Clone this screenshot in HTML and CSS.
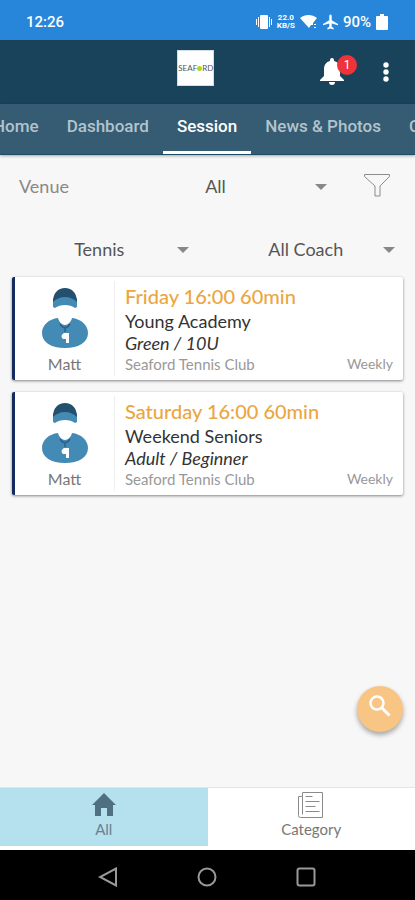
FILE: index.html
```html
<!DOCTYPE html>
<html lang="en">
<head>
<meta charset="utf-8">
<meta name="viewport" content="width=device-width, initial-scale=1">
<title>Seaford Tennis Club</title>
<link rel="stylesheet" href="styles.css">
</head>
<body>
<svg class="defs" aria-hidden="true">
  <symbol id="coach" viewBox="0 0 48 62">
    <path fill="#438ab5" d="M12 12c4-6 20-6 24 0v8l-2 1c-5-4-15-4-20 0l-2-1z"/>
    <path fill="#23506f" d="M12 15C12 6 17 1 24 1s12 5 12 14c-3-3-7-5-12-5s-9 2-12 5z"/>
    <path fill="#438ab5" d="M17 31c1 4 4 7 7 7s6-3 7-7c9 1 16 7 16 15 0 9-9 15-23 15S1 55 1 46c0-8 7-14 16-15z"/>
    <path fill="none" stroke="#2b6288" stroke-width="1.500" d="M19 37c3 5 7 5 10 0M24 41v4"/>
    <path fill="#fff" d="M23 46h5v10h-3v-4h-3c-2-2-2-4 1-6z"/>
  </symbol>
</svg>

<div class="status">
  <time>12:26</time>
  <div class="status-icons">
    <svg width="16" height="16" viewBox="0 0 16 16" fill="#fff" aria-hidden="true"><rect x="4" y="1" width="8" height="14" rx="1"/><path d="M2 3h1v10H2zM0 5h1v6H0zM13 3h1v10h-1zM15 5h1v6h-1z"/></svg>
    <div class="speed"><span>22.0</span><span>KB/S</span></div>
    <svg width="18" height="16" viewBox="0 0 18 16" fill="#fff" aria-hidden="true"><path d="M0 4C5 0 12 0 17 4l-4 5v2h-2l-2 3z"/><path d="M14 10h2v1h-2zM14 13h2v1h-2z"/></svg>
    <svg width="15" height="16" viewBox="0 0 16 16" fill="#fff" aria-hidden="true"><path d="M8 0c1 0 1.300 1 1.300 2v4L16 10v1.500L9.300 9.500v3.500l2 1.500V16L8 15l-3.300 1v-1.500l2-1.500V9.500L0 11.500V10l6.700-4V2C6.700 1 7 0 8 0z"/></svg>
    <span>90%</span>
    <svg width="12" height="16" viewBox="0 0 12 16" fill="#fff" aria-hidden="true"><path d="M4 0h4v2h3q1 0 1 1v12q0 1-1 1H1q-1 0-1-1V3q0-1 1-1h3z"/></svg>
  </div>
</div>

<header class="appbar">
  <div class="logo"><span>SEAF</span><i></i><span>RD</span></div>
  <div class="actions">
    <button class="bell" type="button" aria-label="Notifications">
      <svg width="24" height="28" viewBox="0 0 24 28" fill="#fff" aria-hidden="true"><path d="M10 3V2q0-2 2-2t2 2v1c4 1 6 4 6 8v7l4 4v1H0v-1l4-4v-7c0-4 2-7 6-8zM9 24h6q0 3-3 3t-3-3z"/></svg>
      <span class="badge">1</span>
    </button>
    <button type="button" aria-label="More options">
      <svg width="6" height="20" viewBox="0 0 6 20" fill="#fff" aria-hidden="true"><circle cx="3" cy="3" r="2.700"/><circle cx="3" cy="10" r="2.700"/><circle cx="3" cy="17" r="2.700"/></svg>
    </button>
  </div>
</header>

<nav class="tabs" aria-label="Sections">
  <a href="#">Home</a>
  <a href="#">Dashboard</a>
  <a href="#" class="active" aria-current="page">Session</a>
  <a href="#">News &amp; Photos</a>
  <a href="#">Contact</a>
</nav>

<main>
  <form class="filters">
    <div class="row venue">
      <label for="venue">Venue</label>
      <div class="pick"><select id="venue"><option>All</option></select></div>
      <button type="button" aria-label="Filter">
        <svg width="26" height="23" viewBox="0 0 26 23" fill="none" stroke="#8c8c8c" aria-hidden="true"><path d="M.5.500h25v2L16 12v10h-5V12L.5 2.500z"/></svg>
      </button>
    </div>
    <div class="row pair">
      <div class="pick"><select aria-label="Sport"><option>Tennis</option></select></div>
      <div class="pick"><select aria-label="Coach"><option>All Coach</option></select></div>
    </div>
  </form>

  <section class="cards">
    <article class="card">
      <div class="coach"><svg width="48" height="62" aria-hidden="true"><use href="#coach"/></svg><span>Matt</span></div>
      <div class="info">
        <h2>Friday 16:00 60min</h2>
        <p class="name">Young Academy</p>
        <p class="level">Green / 10U</p>
        <p class="meta"><span>Seaford Tennis Club</span><small>Weekly</small></p>
      </div>
    </article>
    <article class="card">
      <div class="coach"><svg width="48" height="62" aria-hidden="true"><use href="#coach"/></svg><span>Matt</span></div>
      <div class="info">
        <h2>Saturday 16:00 60min</h2>
        <p class="name">Weekend Seniors</p>
        <p class="level">Adult / Beginner</p>
        <p class="meta"><span>Seaford Tennis Club</span><small>Weekly</small></p>
      </div>
    </article>
  </section>

  <button class="fab" type="button" aria-label="Search">
    <svg width="22" height="22" viewBox="0 0 22 22" fill="none" stroke="#fff" aria-hidden="true"><circle cx="8" cy="8" r="6.500" stroke-width="2.500"/><path d="M13 13l7.500 7.500" stroke-width="3"/></svg>
  </button>
</main>

<nav class="bottom" aria-label="Views">
  <a href="#" class="on">
    <svg width="24" height="26" viewBox="0 0 24 26" fill="#4f7080" aria-hidden="true"><path d="M12 1l12 12h-3v11h-6v-8H9v8H3V13H0z"/></svg>
    <span>All</span>
  </a>
  <a href="#">
    <svg width="26" height="26" viewBox="0 0 26 26" fill="none" stroke="#8a8a8a" aria-hidden="true"><path d="M4.500 4.500V.5h20v25h-22q-2 0-2-2v-19h4v18M7.500 4.500h7M7.500 9.500h14M7.500 14.500h10M7.500 19.500h14"/></svg>
    <span>Category</span>
  </a>
</nav>

<div class="system">
  <button type="button" aria-label="Back"><svg width="20" height="20" viewBox="0 0 20 20" aria-hidden="true"><path d="M18 1.500v17L2 10z"/></svg></button>
  <button type="button" aria-label="Home screen"><svg width="20" height="20" viewBox="0 0 20 20" aria-hidden="true"><circle cx="10" cy="10" r="8.500"/></svg></button>
  <button type="button" aria-label="Recent apps"><svg width="20" height="20" viewBox="0 0 20 20" aria-hidden="true"><rect x="1.500" y="1.500" width="17" height="17" rx="2"/></svg></button>
</div>
</body>
</html>
```
FILE: styles.css
```css
* { box-sizing: border-box; }

body {
  margin: 0;
  min-height: 100vh;
  display: flex;
  flex-direction: column;
  background: #f7f7f7;
  color: #333;
  font-family: Lato, "Open Sans", sans-serif;
  font-size: 16px;
}

button {
  padding: 0;
  border: 0;
  background: none;
  font: inherit;
}

a { text-decoration: none; }
svg { display: block; flex: none; }
h2, p { margin: 0; }
.defs { position: absolute; width: 0; height: 0; }

.status {
  height: 40px;
  padding: 4px 27px 0 26px;
  display: flex;
  align-items: center;
  justify-content: space-between;
  background: #2786da;
  color: #fff;
  font: 500 15px/20px Roboto, sans-serif;
}

.status-icons {
  display: flex;
  align-items: center;
  gap: 5px;
}

.speed {
  display: flex;
  flex-direction: column;
  font-size: 8px;
  font-weight: 700;
  line-height: 8px;
  text-align: center;
}

.appbar {
  height: 64px;
  padding: 0 26px 0 20px;
  display: grid;
  grid-template-columns: 9fr 37px 10fr;
  align-items: center;
  background: #19435a;
}

.logo {
  grid-column: 2;
  height: 36px;
  margin-bottom: 8px;
  display: flex;
  align-items: center;
  justify-content: center;
  background: #fff;
  border: 1px solid #d5dde2;
  color: #555;
  font: 8px/10px Lato, sans-serif;
}

.logo i {
  flex: none;
  width: 5px;
  height: 5px;
  border-radius: 50%;
  background: #b4d420;
}

.actions {
  display: flex;
  align-items: center;
  justify-content: flex-end;
  gap: 39px;
}

.bell { position: relative; }

.badge {
  position: absolute;
  top: -3px;
  left: 17px;
  width: 20px;
  height: 20px;
  border-radius: 50%;
  background: #ee343a;
  color: #fff;
  font: 12px/20px Roboto, sans-serif;
}

.tabs {
  height: 51px;
  display: flex;
  overflow: hidden;
  background: #355c72;
  border-bottom: 1px solid #1e4c66;
  box-shadow: 0 1px 3px #0005;
}

.tabs a {
  flex: none;
  padding: 0 14px;
  color: #b3c3cd;
  font: 500 17px/45px Roboto, sans-serif;
}

.tabs a:first-child { margin-left: -21px; }

.tabs .active {
  color: #fff;
  border-bottom: 3px solid #fff;
}

main {
  flex: 1;
  position: relative;
}

.row {
  height: 61px;
  display: flex;
  align-items: center;
}

.venue { padding: 0 25px 0 19px; }
.venue label { width: 85px; color: #888; font-size: 18px; }
.venue button { margin-left: 37px; }
.pair { padding: 5px 20px 0 10px; gap: 28px; }

.pick {
  flex: 1;
  position: relative;
}

.pick::after {
  content: "";
  position: absolute;
  top: 50%;
  right: 0;
  margin-top: -2px;
  border: 6px solid transparent;
  border-top-color: #888;
  border-bottom: 0;
  pointer-events: none;
}

select {
  display: block;
  width: 100%;
  height: 32px;
  padding: 0;
  appearance: none;
  border: 0;
  background: none;
  color: #555;
  font: 18px/32px Lato, sans-serif;
  text-align-last: center;
}

.cards {
  padding: 0 12px;
  display: grid;
  gap: 12px;
}

.card {
  height: 103px;
  display: flex;
  background: #fff;
  border-left: 3px solid #142a60;
  border-radius: 2px;
  box-shadow: 0 1px 3px #0007;
}

.coach {
  width: 100px;
  margin: 4px 0;
  padding-top: 6px;
  display: flex;
  flex-direction: column;
  align-items: center;
  gap: 5px;
  border-right: 1px solid #eee;
  color: #777;
  line-height: 20px;
}

.info {
  flex: 1;
  padding: 6px 10px 0;
}

.info h2 {
  color: #eba641;
  font-size: 20px;
  font-weight: 500;
  line-height: 26px;
}

.info .name {
  font-size: 18px;
  line-height: 24px;
}

.info .level {
  font-size: 18px;
  font-style: italic;
  line-height: 20px;
}

.info .meta {
  display: flex;
  justify-content: space-between;
  color: #999;
  font-size: 15px;
  line-height: 22px;
}

.meta small { font-size: 14px; }

.fab {
  position: absolute;
  right: 12px;
  bottom: 55px;
  width: 46px;
  height: 46px;
  display: grid;
  justify-content: center;
  padding-top: 9px;
  align-content: start;
  border-radius: 50%;
  background: #f9c585;
  box-shadow: 0 3px 5px #0005;
}

.bottom {
  height: 63px;
  padding-bottom: 4px;
  display: grid;
  grid-template-columns: 1fr 1fr;
  background: #fff;
  border-top: 1px solid #e5e5e5;
}

.bottom a {
  padding-top: 4px;
  display: flex;
  flex-direction: column;
  align-items: center;
  gap: 1px;
  color: #777;
  font-size: 15px;
  line-height: 20px;
}

.bottom .on { background: #b5e0ee; color: #66838f; }

.system {
  height: 50px;
  padding: 3px 60px 0 58px;
  display: grid;
  grid-template-columns: repeat(3, 1fr);
  justify-items: center;
  align-items: center;
  background: #000;
}

.system svg { fill: none; stroke: #999; stroke-width: 2; }
```
